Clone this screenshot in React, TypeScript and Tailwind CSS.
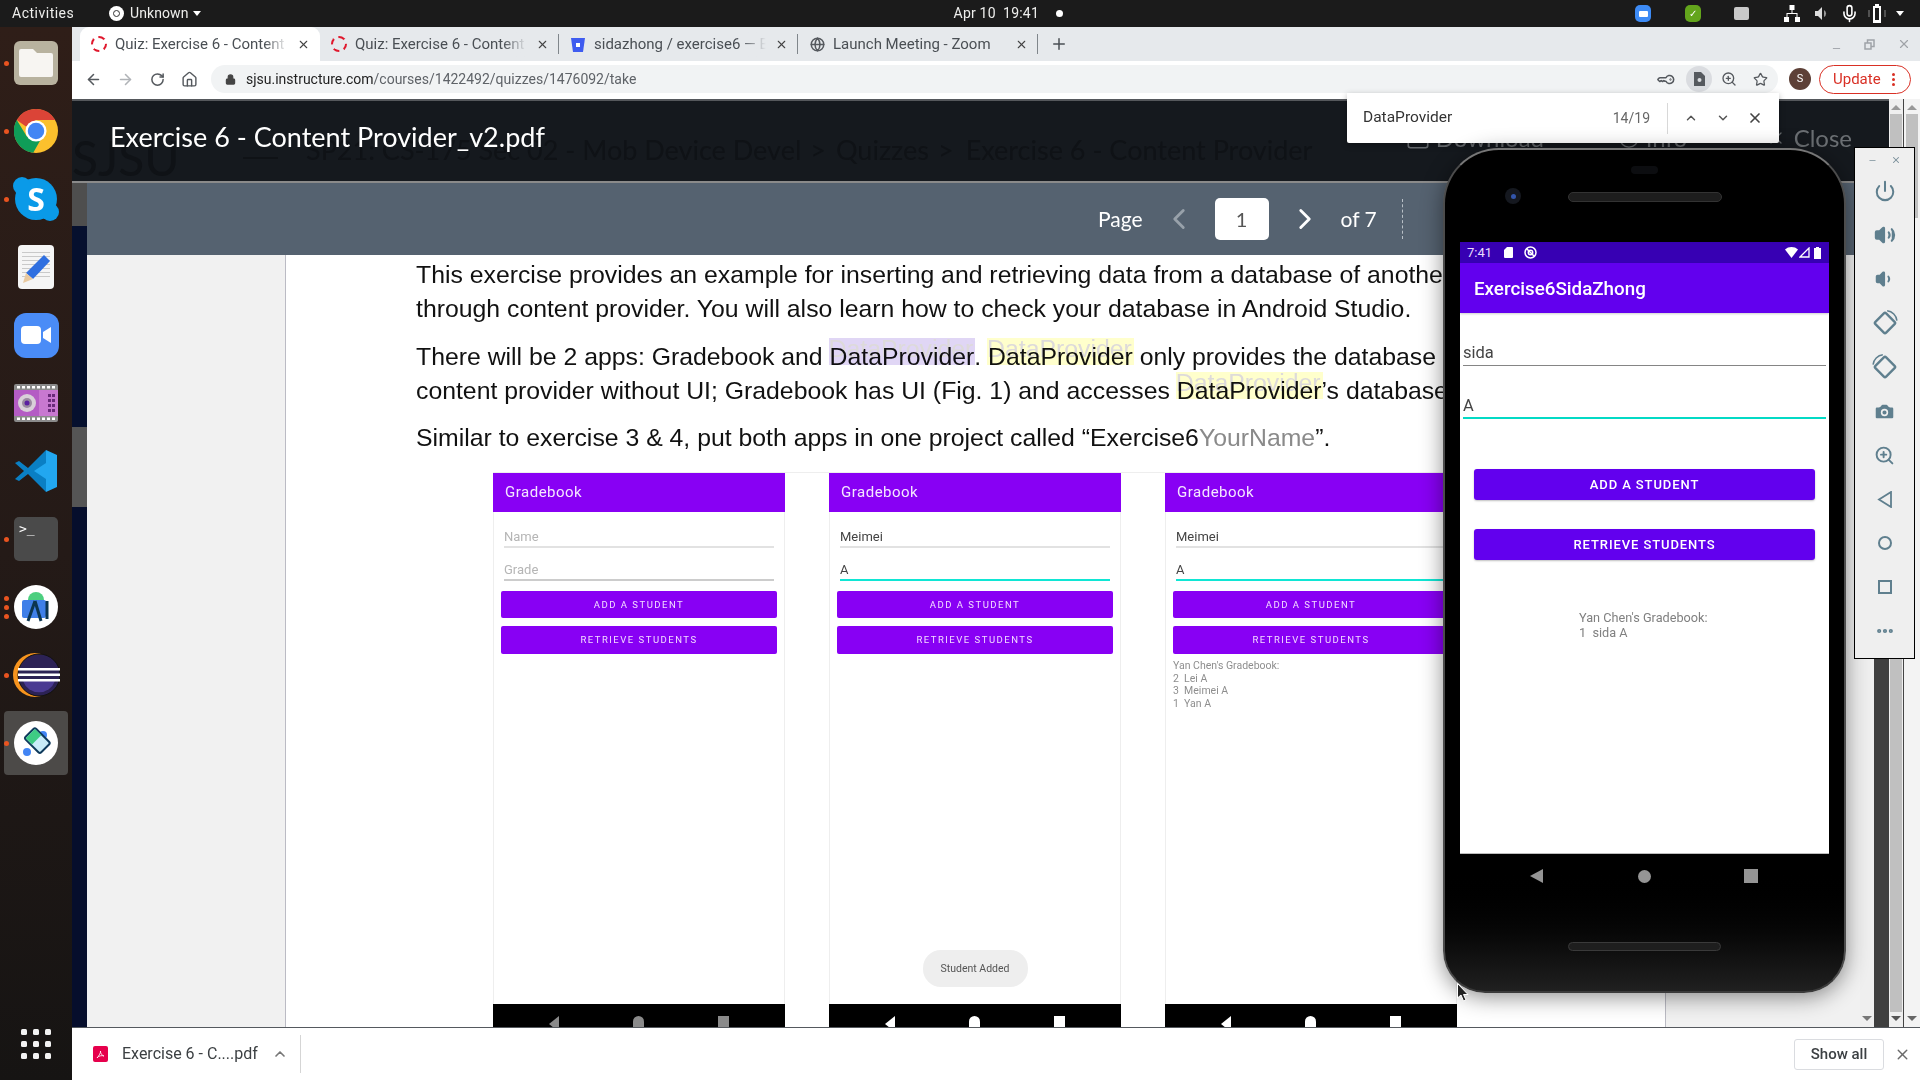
import React from "react";
import { ArrowLeft, ArrowRight, RotateCw, Home, Lock, KeyRound, ZoomIn, Star, X, Plus, ChevronUp, ChevronDown, ChevronLeft, ChevronRight, Power, Volume2, Volume1, Camera, Globe, Minus, Mic, Download, Info, MoreHorizontal } from "lucide-react";

const ub = "font-['Roboto','Noto_Sans',sans-serif]";

function Dot() { return <span className="w-[5px] h-[5px] rounded-full bg-[#e95420]" />; }

function DockSlot({ dots = 0, active = false, children }: { dots?: number; active?: boolean; children: React.ReactNode }) {
  return (
    <div className="relative h-[68px] w-[72px] flex items-center justify-center">
      {active && <div className="absolute left-[4px] top-[2px] w-[64px] h-[64px] rounded-[4px] bg-[#4c4a48]" />}
      {dots > 0 && (
        <div className="absolute left-[4px] top-0 h-full flex flex-col justify-center gap-[4px]">
          {Array.from({ length: dots }).map((_, i) => <Dot key={i} />)}
        </div>
      )}
      <div className="relative w-[46px] h-[46px] flex items-center justify-center">{children}</div>
    </div>
  );
}

function Dock() {
  return (
    <div className="w-[72px] shrink-0 flex flex-col items-center bg-linear-to-b from-[#2f1e18] via-[#241a17] to-[#161413] pt-[2px]">
      <DockSlot dots={1}>
        <div className="w-[44px] h-[44px] rounded-[6px] bg-[#b8b29f] flex items-center justify-center">
          <svg width="34" height="28" viewBox="0 0 34 28"><path fill="#f7f5f2" d="M2 0h12l4 4h14a2 2 0 0 1 2 2v20a2 2 0 0 1-2 2H2a2 2 0 0 1-2-2V2a2 2 0 0 1 2-2z" /></svg>
        </div>
      </DockSlot>
      <DockSlot dots={1}>
        <svg width="44" height="44" viewBox="0 0 48 48">
          <circle cx="24" cy="24" r="24" fill="#fbc02d" />
          <path fill="#0f9d58" d="M3 12 A24 24 0 0 0 21 47.8 L31 30 L14 30Z" />
          <path fill="#db4437" d="M24 0 A24 24 0 0 1 45 12 L24 12 L13 19 L3 12 A24 24 0 0 1 24 0Z" />
          <circle cx="24" cy="24" r="11.5" fill="#fff" />
          <circle cx="24" cy="24" r="9" fill="#4285f4" />
        </svg>
      </DockSlot>
      <DockSlot dots={1}>
        <div className="relative w-[42px] h-[42px] rounded-full bg-[#0a9ae8] flex items-center justify-center">
          <div className="absolute left-[-2px] top-[-1px] w-[18px] h-[18px] rounded-full bg-[#0a9ae8]" />
          <div className="absolute right-[-2px] bottom-[-1px] w-[18px] h-[18px] rounded-full bg-[#0a9ae8]" />
          <span className="relative text-white font-bold text-[32px] leading-none font-['Open_Sans',sans-serif]">S</span>
        </div>
      </DockSlot>
      <DockSlot>
        <div className="relative w-[36px] h-[44px] rounded-[4px] bg-[#f5f5f5] overflow-hidden flex flex-col gap-[3px] pt-[7px] px-[4px]">
          {[0,1,2,3,4,5,6].map(i => <div key={i} className="h-px bg-[#c9c9c9]" />)}
          <svg className="absolute inset-0" width="36" height="44" viewBox="0 0 36 44"><path fill="#2f6fe0" d="M26 10l6 6-17 18-7-6z" /><path fill="#e8c9a0" d="M8 28l7 6-10 4z" /></svg>
        </div>
      </DockSlot>
      <DockSlot>
        <div className="w-[45px] h-[45px] rounded-[12px] bg-[#4a8cf7] flex items-center justify-center">
          <svg width="30" height="18" viewBox="0 0 30 18"><rect width="20" height="18" rx="4" fill="#fff" /><path fill="#fff" d="M22 6l8-5v16l-8-5z" /></svg>
        </div>
      </DockSlot>
      <DockSlot>
        <svg width="44" height="38" viewBox="0 0 44 38">
          <rect width="44" height="38" rx="2" fill="#8a8a8a" />
          <rect y="6" width="44" height="26" fill="#b45cc4" />
          <rect x="25" y="6" width="19" height="26" fill="#c878d0" />
          <circle cx="13" cy="19" r="9" fill="#d8d0d8" /><circle cx="13" cy="19" r="5" fill="#9a8aa0" /><circle cx="13" cy="19" r="2.5" fill="#5a1fa0" />
          {[3,8,13,18,23,28,33,38].map(x => <g key={x}><rect x={x} y="2" width="3" height="2.5" fill="#fff" /><rect x={x} y="33.5" width="3" height="2.5" fill="#fff" /></g>)}
          {[10,15,20,25].map(y => <g key={y}><rect x="34" y={y} width="3" height="3" fill="#6a2a7a" /><rect x="38" y={y} width="3" height="3" fill="#6a2a7a" /></g>)}
        </svg>
      </DockSlot>
      <DockSlot>
        <svg width="44" height="44" viewBox="0 0 44 44">
          <path fill="#0a7fc4" d="M32 1 14 19 5 12l-4 2 9 8-9 8 4 2 9-7 18 18z" />
          <path fill="#22a7f0" d="M32 1l11 5v32l-11 5V14L20 22l12 8z" />
        </svg>
      </DockSlot>
      <DockSlot dots={1}>
        <div className="w-[44px] h-[44px] rounded-[5px] bg-[#4a4a4a] text-white text-[13px] leading-none font-['DejaVu_Sans_Mono',monospace] pl-[5px] pt-[5px]">&gt;_</div>
      </DockSlot>
      <DockSlot dots={3}>
        <div className="relative w-[44px] h-[44px] rounded-full bg-white flex items-center justify-center">
          <svg width="28" height="32" viewBox="0 0 28 32">
            <path fill="#4ccf7f" d="M6 9a8 8 0 0 1 16 0z" />
            <rect x="0" y="9" width="24" height="18" rx="2" fill="#3f7fe8" />
            <path d="M13 10 6 30M13 10l6 20M25 10v18" stroke="#0c3550" strokeWidth="3" fill="none" />
          </svg>
        </div>
      </DockSlot>
      <DockSlot dots={1}>
        <svg width="48" height="44" viewBox="0 0 48 44" className="shrink-0">
          <circle cx="23" cy="22" r="22" fill="#f7941e" />
          <circle cx="27" cy="22" r="21" fill="#2c2255" stroke="#111" strokeWidth="1" />
          <path fill="#4a3a92" d="M11 28h32a17 17 0 0 1-32 0z" />
          <rect x="6" y="15" width="42" height="2.5" fill="#fff" /><rect x="6" y="20.5" width="42" height="2.5" fill="#fff" /><rect x="6" y="26" width="42" height="2.5" fill="#fff" />
        </svg>
      </DockSlot>
      <DockSlot dots={1} active>
        <div className="w-[44px] h-[44px] rounded-full bg-white flex items-center justify-center">
          <svg width="34" height="34" viewBox="0 0 34 34">
            <circle cx="24" cy="9" r="4" fill="#4285f4" /><circle cx="8" cy="26" r="4" fill="#4285f4" />
            <g transform="rotate(45 18 15)"><rect x="7" y="7" width="22" height="15" rx="2" fill="#c9ecf9" stroke="#0f3a5c" strokeWidth="2" /><rect x="8" y="8" width="9" height="13" fill="#3ecb84" /></g>
          </svg>
        </div>
      </DockSlot>
      <div className="flex-1" />
      <div className="grid grid-cols-3 gap-x-[6px] gap-y-[6px] mb-[21px]">
        {Array.from({ length: 9 }).map((_, i) => <div key={i} className="w-[6px] h-[6px] rounded-[1.5px] bg-[#f2f2f2]" />)}
      </div>
    </div>
  );
}

function TopBar() {
  return (
    <div className={`h-[27px] shrink-0 bg-[#1b1b1b] text-[#eeeeec] text-[14px] flex items-center ${ub}`}>
      <span className="ml-[12px] w-[97px] tracking-[0.5px]">Activities</span>
      <span className="w-[15px] h-[15px] rounded-full bg-white mr-[6px] flex items-center justify-center"><span className="w-[7px] h-[7px] rounded-full border border-[#333]" /></span>
      <span className="tracking-[0.1px]">Unknown</span>
      <span className="ml-[4px] w-0 h-0 border-l-[4px] border-r-[4px] border-t-[5px] border-l-transparent border-r-transparent border-t-white" />
      <div className="flex-1 flex items-center justify-center pl-[190px]">
        <span className="ml-[6px] tracking-[0.2px]">Apr 10&nbsp;&nbsp;19:41</span>
        <span className="ml-[17px] w-[7px] h-[7px] rounded-full bg-white" />
      </div>
      <div className="w-[300px] flex items-center relative h-full">
        <div className="absolute left-[15px] top-[5px] w-[16px] h-[17px] rounded-[5px] bg-[#3d8bf5] flex items-center justify-center"><span className="w-[9px] h-[6px] bg-white rounded-[1px]" /></div>
        <div className="absolute left-[65px] top-[5px] w-[16px] h-[17px] rounded-[5px] bg-[#63a51c] flex items-center justify-center text-[10px] text-white leading-none">✓</div>
        <div className="absolute left-[114px] top-[7px] w-[15px] h-[13px] rounded-[2px] bg-[#c9c9c9]" />
        <svg className="absolute left-[164px] top-[5px]" width="16" height="17" viewBox="0 0 16 17" fill="#fff"><rect x="5.5" y="0" width="5" height="5" /><rect x="0" y="12" width="5" height="5" /><rect x="11" y="12" width="5" height="5" /><path d="M7.5 5h1v3h5v4h-1V9H3.500v3h-1V8h5z" /></svg>
        <svg className="absolute left-[195px] top-[7px]" width="14" height="13" viewBox="0 0 14 13" fill="#ddd"><path d="M0 4h3l4-4v13l-4-4H0z" /><path d="M9 3a4 4 0 0 1 0 7z" fill="#999" /></svg>
        <Mic className="absolute left-[220px] top-[4px]" size={19} color="#fff" strokeWidth={2} />
        <svg className="absolute left-[248px] top-[4px]" width="18" height="19" viewBox="0 0 18 19"><path d="M7 0h4v2h2v17H5V2h2z" fill="#fff" /><path d="M7 4h4v12H7z" fill="#1b1b1b" /><path d="M1 6v7M17 6v7" stroke="#888" /></svg>
        <span className="absolute left-[276px] top-[11px] w-0 h-0 border-l-[4px] border-r-[4px] border-t-[5px] border-l-transparent border-r-transparent border-t-white" />
      </div>
    </div>
  );
}

function QuizIcon() {
  return <span className="w-[16px] h-[16px] rounded-full border-[2px] border-dashed border-[#e0182d] shrink-0" />;
}

function Tab({ w, icon, title, active, sep, fade }: { w: number; icon: React.ReactNode; title: string; active?: boolean; sep?: boolean; fade: string }) {
  return (
    <div style={{ width: w }} className={`relative h-[34px] shrink-0 flex items-center pl-[11px] pr-[10px] ${active ? "bg-white rounded-t-[9px]" : ""}`}>
      <span className="w-[16px] flex justify-center shrink-0">{icon}</span>
      <div className="ml-[8px] flex-1 relative overflow-hidden whitespace-nowrap text-[15px] text-[#4a4f54] leading-[34px]">
        <span>{title}</span>
        <div className={`absolute right-0 top-0 h-full w-[24px] bg-linear-to-r from-transparent ${fade}`} />
      </div>
      <X size={13} strokeWidth={2} color="#444" className="ml-[9px] shrink-0" />
      {sep && <span className="absolute right-0 top-[7px] h-[20px] w-px bg-[#80868b]" />}
    </div>
  );
}

function TabStrip() {
  return (
    <div className={`h-[34px] shrink-0 bg-[#e6e9ec] flex items-center pl-[8px] ${ub}`}>
      <Tab w={240} active icon={<QuizIcon />} title="Quiz: Exercise 6 - Content" fade="to-white" />
      <Tab w={239} sep icon={<QuizIcon />} title="Quiz: Exercise 6 - Content" fade="to-[#e6e9ec]" />
      <Tab w={239} sep fade="to-[#e6e9ec]" title="sidazhong / exercise6 — B" icon={
        <svg width="14" height="15" viewBox="0 0 14 15"><path fill="#3f5cf0" d="M0 1h14l-2 14H2z" /><rect x="5" y="6" width="4" height="4" fill="#fff" /></svg>} />
      <Tab w={240} sep fade="to-transparent" title="Launch Meeting - Zoom" icon={<Globe size={15} color="#55595e" strokeWidth={2.4} />} />
      <Plus size={18} color="#4a4f54" strokeWidth={2} className="ml-[12px]" />
      <div className="flex-1" />
      <div className="flex items-center gap-[22px] pr-[9px] text-[#9fa3a8]">
        <Minus size={11} strokeWidth={2} className="translate-y-[4px]" />
        <svg width="11" height="11" viewBox="0 0 11 11" fill="none" stroke="currentColor" strokeWidth="1.5"><rect x="3.500" y="1" width="6.500" height="6.500" /><rect x="1" y="4" width="6" height="6" fill="#e6e9ec" /></svg>
        <X size={14} strokeWidth={2} />
      </div>
    </div>
  );
}

function Toolbar() {
  return (
    <div className={`h-[38px] shrink-0 bg-white flex items-center pl-[13px] pr-[9px] pb-[2px] ${ub}`}>
      <ArrowLeft size={17} color="#55595e" strokeWidth={2.2} />
      <ArrowRight size={17} color="#b0b3b7" strokeWidth={2.2} className="ml-[15px]" />
      <RotateCw size={15} color="#55595e" strokeWidth={2.4} className="ml-[16px]" />
      <Home size={17} color="#55595e" strokeWidth={2} className="ml-[16px]" />
      <div className="ml-[13px] h-[28px] w-[1567px] rounded-full bg-[#f1f3f4] flex items-center pl-[14px] pr-[10px]">
        <Lock size={11} color="#444" fill="#444" strokeWidth={2.5} />
        <span className="ml-[10px] text-[14px] text-[#222]">sjsu.instructure.com<span className="text-[#5f6368]">/courses/1422492/quizzes/1476092/take</span></span>
        <div className="flex-1" />
        <KeyRound size={15} color="#55595e" strokeWidth={2.5} className="rotate-45 -translate-x-[2px]" />
        <div className="ml-[10px] w-[26px] h-[26px] rounded-full bg-[#dadce0] flex items-center justify-center">
          <svg width="11" height="14" viewBox="0 0 11 14"><path fill="#55595e" d="M0 0h7l4 4v10H0z" /><circle cx="5.500" cy="8" r="2" fill="#dadce0" /></svg>
        </div>
        <ZoomIn size={16} color="#55595e" strokeWidth={2} className="ml-[9px]" />
        <Star size={15} color="#55595e" strokeWidth={2} className="ml-[16px]" />
      </div>
      <div className="ml-[11px] w-[22px] h-[22px] rounded-full bg-[#5d4037] text-white text-[11px] flex items-center justify-center">S</div>
      <div className="ml-[8px] w-[92px] h-[29px] rounded-full border border-[#d93025] flex items-center pl-[13px] text-[15px] text-[#d93025]">
        Update
        <span className="ml-[11px] flex flex-col gap-[2px]">
          <span className="w-[3px] h-[3px] rounded-full bg-[#d93025]" /><span className="w-[3px] h-[3px] rounded-full bg-[#d93025]" /><span className="w-[3px] h-[3px] rounded-full bg-[#d93025]" />
        </span>
      </div>
    </div>
  );
}

function ViewerHeader() {
  return (
    <div className="relative h-[84px] shrink-0 bg-[#15191e] border-t-2 border-t-[#55585c] border-b-2 border-b-[#8a8a8a] overflow-hidden font-['Lato',sans-serif]">
      <div className="absolute left-0 top-[27px] flex items-center text-[27px] text-[#0f1216] whitespace-nowrap leading-[44px]">
        <span className="text-[48px] w-[171px] translate-y-[8px] leading-[44px]">SJSU</span>
        <span className="w-[35px] h-[2px] bg-[#0f1216] mr-[28px] translate-y-[8px]" />
        <span>SP21: CS-175 Sec 02 - Mob Device Devel</span>
        <span className="ml-[9px]">&gt;</span>
        <span className="ml-[10px]">Quizzes</span>
        <span className="ml-[9px]">&gt;</span>
        <span className="ml-[12px]">Exercise 6 - Content Provider</span>
      </div>
      <div className="relative h-full flex items-center pl-[38px] pb-[7px]">
        <span className="text-white text-[27px]">Exercise 6 - Content Provider_v2.pdf</span>
        <div className="flex-1" />
        <div className="flex items-center text-[#6b6f73] text-[24px] pr-[37px]">
          <Download size={26} strokeWidth={1.500} />
          <span className="ml-[5px] w-[182px]">Download</span>
          <Info size={22} strokeWidth={1.500} />
          <span className="ml-[6px] w-[120px]">Info</span>
          <X size={20} strokeWidth={1.500} />
          <span className="ml-[8px]">Close</span>
        </div>
      </div>
    </div>
  );
}

function Hl({ c }: { c: string }) {
  return (
    <span className="relative inline-block">
      <span className={`absolute left-[-1px] right-[-1px] top-[-2px] h-[27px] text-[#dddada] mix-blend-multiply ${c} leading-[22px]`}>DataProvider</span>
      DataProvider
    </span>
  );
}

function PhoneCard({ name, grade, first, toast, list, tone }: { name: string; grade: string; first?: boolean; toast?: boolean; list?: boolean; tone: string }) {
  const navC = tone === "g" ? "bg-[#8a8a8a]" : "bg-white";
  return (
    <div className="relative w-[292px] h-[554px] shrink-0 border-x border-[#eeeeee] flex flex-col font-['Roboto',sans-serif] bg-white">
      <div className="h-[39px] shrink-0 -mx-px bg-[#8800f4] text-[#f4e6ff] text-[15px] tracking-[0.5px] leading-[38px] pl-[12px]">Gradebook</div>
      <div className="mx-[10px] mt-[14px] h-[22px] border-b-2 border-[#e2e2e2] text-[13px] leading-[20px] pt-[1px]">
        <span className={first ? "text-[#b5b5b5]" : "text-[#444]"}>{name}</span>
      </div>
      <div className={`mx-[10px] mt-[11px] h-[22px] border-b-2 text-[13px] leading-[20px] pt-[1px] ${first ? "border-[#cccccc]" : "border-[#10e6d4]"}`}>
        <span className={first ? "text-[#b5b5b5]" : "text-[#444]"}>{grade}</span>
      </div>
      <div className="mx-[7px] mt-[10px] h-[27px] rounded-[2px] bg-[#8800f4] flex items-center justify-center text-[#f3dcff] text-[9.500px] tracking-[1.5px]">ADD A STUDENT</div>
      <div className="mx-[7px] mt-[8px] h-[28px] rounded-[2px] bg-[#8800f4] flex items-center justify-center text-[#f3dcff] text-[9.500px] tracking-[1.5px]">RETRIEVE STUDENTS</div>
      {list && (
        <div className="ml-[7px] mt-[6px] text-[10.500px] leading-[12.500px] text-[#8e8e8e] whitespace-pre">
          <div>Yan Chen's Gradebook:</div><div>2  Lei A</div><div>3  Meimei A</div><div>1  Yan A</div>
        </div>
      )}
      <div className="flex-1" />
      {toast && <div className="self-center mb-[17px] w-[105px] h-[37px] rounded-[18px] bg-[#eeeeee] text-[#555] text-[10.500px] flex items-center justify-center">Student Added</div>}
      <div className="h-[23px] shrink-0 -mx-px bg-black overflow-hidden flex items-start justify-between px-[56px] pt-[12px]">
        <span className={`w-0 h-0 border-y-[8px] border-y-transparent border-r-[10px] ${tone === "g" ? "border-r-[#8a8a8a]" : "border-r-white"}`} />
        <span className={`w-[11px] h-[16px] rounded-full ${navC}`} />
        <span className={`w-[11px] h-[16px] ${navC}`} />
      </div>
    </div>
  );
}

function PdfPage() {
  return (
    <div className="w-[1379px] shrink-0 bg-white overflow-hidden font-['Liberation_Sans',Arial,sans-serif] text-[#111] text-[24.800px] leading-[34px] whitespace-nowrap pt-[3px]">
      <div className="pl-[130px]">
        <p>This exercise provides an example for inserting and retrieving data from a database of another app</p>
        <p>through content provider. You will also learn how to check your database in Android Studio.</p>
        <p className="mt-[14px]">There will be 2 apps: Gradebook and <Hl c="bg-[#e0d6f5]" />. <Hl c="bg-[#ffffcc]" /> only provides the database and</p>
        <p>content provider without UI; Gradebook has UI (Fig. 1) and accesses <Hl c="bg-[#ffffcc]" />’s database</p>
        <p className="mt-[13px]">Similar to exercise 3 &amp; 4, put both apps in one project called “Exercise6<span className="text-[#8a8a8a]">YourName</span>”.</p>
      </div>
      <div className="mt-[17px] ml-[207px] flex gap-[44px] whitespace-normal border-t border-[#eeeeee] blur-[0.35px]">
        <PhoneCard first name="Name" grade="Grade" tone="g" />
        <PhoneCard name="Meimei" grade="A" toast tone="w" />
        <PhoneCard name="Meimei" grade="A" list tone="w" />
      </div>
    </div>
  );
}

function ScrollArrow({ up, c = "#777" }: { up?: boolean; c?: string }) {
  return <span className={`w-0 h-0 border-x-[5px] border-x-transparent ${up ? "border-b-[5px]" : "border-t-[5px]"}`} style={up ? { borderBottomColor: c } : { borderTopColor: c }} />;
}

function Strip() {
  return (
    <div className="w-[15px] shrink-0 flex flex-col">
      <div className="h-[43px] bg-[#4e4e4e]" />
      <div className="h-[201px] bg-[#06102e]" />
      <div className="h-[80px] bg-[#555555]" />
      <div className="flex-1 bg-[#060e2c]" />
    </div>
  );
}

function Viewer() {
  return (
    <div className="flex-1 min-h-0 flex">
      <div className="w-[1817px] shrink-0 flex flex-col bg-[#3f3f3f]">
        <ViewerHeader />
        <div className="flex-1 min-h-0 flex relative">
          <Strip />
          <div className="flex-1 min-w-0 flex flex-col">
            <div className="h-[72px] shrink-0 bg-[#556270] flex items-center text-white text-[21px] font-['Lato',sans-serif] pl-[1011px] pb-px">
              <span>Page</span>
              <ChevronLeft size={34} strokeWidth={2} color="#98a1aa" className="ml-[19px]" />
              <div className="ml-[19px] w-[54px] h-[42px] mt-px rounded-[5px] bg-white text-[#555] text-[20px] flex items-center justify-center">1</div>
              <ChevronRight size={34} strokeWidth={2} color="#fff" className="ml-[19px]" />
              <span className="ml-[19px]">of 7</span>
              <span className="ml-[25px] h-[40px] border-l border-dashed border-[#b9c0c7]" />
            </div>
            <div className="flex-1 min-h-0 flex">
              <div className="w-[199px] shrink-0 bg-[#f1f1f1] border-r border-[#bbbbc4]" />
              <PdfPage />
              <div className="flex-1 bg-[#f1f1f1] border-l border-[#bbbbc4] flex justify-end">
                <div className="w-[14px] bg-[#efefef] flex flex-col items-center justify-end pb-[6px]"><ScrollArrow /></div>
              </div>
            </div>
          </div>
          <div className="w-[15px] shrink-0 bg-[#3f3f3f]" />
        </div>
      </div>
      <div className="w-[15px] shrink-0 bg-[#efefef] flex flex-col items-center py-[6px] border-r border-[#444]">
        <ScrollArrow up c="#999" />
        <div className="w-[12px] flex-1 my-[4px] bg-[#c0c0c0]" />
        <ScrollArrow c="#555" />
      </div>
      <div className="flex-1 bg-[#f3f3f3] flex flex-col items-center py-[6px]">
        <ScrollArrow up c="#999" />
        <div className="w-[12px] h-[104px] mt-[4px] bg-[#c0c0c0]" />
        <div className="flex-1" />
        <ScrollArrow c="#666" />
      </div>
    </div>
  );
}

function DownloadBar() {
  return (
    <div className={`h-[53px] shrink-0 bg-white border-t border-[#55595e] flex items-center ${ub}`}>
      <div className="ml-[21px] w-[15px] h-[16px] rounded-[2px] bg-[#e6004c] flex items-center justify-center">
        <svg width="9" height="9" viewBox="0 0 9 9" fill="none" stroke="#fff" strokeWidth="0.8"><path d="M1 8C3 6 5 2 4.500 1 4 2 6 6 8 6 6 5 2 6 1 8z" /></svg>
      </div>
      <span className="ml-[14px] text-[16px] text-[#3c4043] w-[150px] whitespace-nowrap">Exercise 6 - C....pdf</span>
      <ChevronUp size={16} strokeWidth={2.500} color="#777" />
      <span className="ml-[12px] h-[38px] w-px bg-[#d5d5d5]" />
      <div className="flex-1" />
      <div className="w-[90px] h-[31px] rounded-[3px] border border-[#dadce0] text-[15px] font-medium text-[#3c4043] flex items-center justify-center">Show all</div>
      <X size={17} strokeWidth={2} color="#6a6a6a" className="ml-[10px] mr-[9px]" />
    </div>
  );
}

function FindBar() {
  return (
    <div className={`absolute left-[1347px] top-[93px] w-[432px] h-[50px] bg-white rounded-b-[2px] shadow-[0_2px_6px_rgba(0,0,0,0.3)] flex items-center pl-[16px] pr-[16px] text-[14px] ${ub}`}>
      <span className="text-[#333] text-[15.500px]">DataProvider</span>
      <div className="flex-1" />
      <span className="text-[#666]">14/19</span>
      <span className="ml-[17px] h-[31px] w-px bg-[#d8d8d8]" />
      <ChevronUp size={14} strokeWidth={2.500} color="#555" className="ml-[16px]" />
      <ChevronDown size={14} strokeWidth={2.500} color="#555" className="ml-[18px]" />
      <X size={16} strokeWidth={2.500} color="#444" className="ml-[17px]" />
    </div>
  );
}

function Phone() {
  return (
    <div className="absolute left-[1443px] top-[148px] w-[403px] h-[845px] rounded-t-[56px] rounded-b-[42px] bg-linear-to-b from-black via-black via-85% to-[#202020] border-[2px] border-[#4c4c4c] border-t-[#777777] border-b-[#3a3a3a] shadow-[0_4px_22px_rgba(0,0,0,0.45)] flex flex-col items-center">
      <div className="relative w-full h-[92px] shrink-0 flex flex-col items-center">
        <div className="mt-[16px] w-[27px] h-[8px] rounded-full bg-[#0c0d10]" />
        <div className="mt-[18px] w-[154px] h-[10px] rounded-full bg-[#1d1d1d] border border-[#333]" />
        <div className="absolute left-[60px] top-[38px] w-[16px] h-[16px] rounded-full bg-[#15181f] flex items-center justify-center"><span className="w-[5px] h-[5px] rounded-full bg-[#3355aa]" /></div>
      </div>
      <div className="w-[369px] h-[612px] shrink-0 bg-white flex flex-col font-['Roboto',sans-serif] border-b border-[#bdbdbd]">
        <div className="h-[21px] shrink-0 bg-[#3700b3] flex items-center px-[7px] text-[#e8ddff] text-[13px]">
          <span>7:41</span>
          <svg className="ml-[12px]" width="9" height="11" viewBox="0 0 9 11" fill="#fff"><path d="M3 0h5a1 1 0 0 1 1 1v9a1 1 0 0 1-1 1H1a1 1 0 0 1-1-1V3z" /></svg>
          <svg className="ml-[11px]" width="13" height="13" viewBox="0 0 13 13" fill="none" stroke="#fff" strokeWidth="1.500"><circle cx="6.500" cy="6.500" r="5.500" /><circle cx="6.500" cy="6.500" r="2.200" /><path d="M3 3l7 7" /></svg>
          <div className="flex-1" />
          <svg width="13" height="11" viewBox="0 0 13 11" fill="#fff"><path d="M0 2.500C3.500-.8 9.500-.8 13 2.500L6.500 11z" /></svg>
          <svg className="ml-[1px]" width="11" height="11" viewBox="0 0 11 11" fill="none" stroke="#fff" strokeWidth="1.300"><path d="M10 1v9H1z" /></svg>
          <svg className="ml-[4px] mr-[1px]" width="7" height="12" viewBox="0 0 7 12" fill="#fff"><path d="M2 0h3v1h2v11H0V1h2z" /></svg>
        </div>
        <div className="h-[50px] shrink-0 bg-[#6200ee] flex items-center pl-[14px] pt-[2px] text-white text-[18.800px] font-medium shadow-[0_1px_2px_rgba(0,0,0,0.2)]">Exercise6SidaZhong</div>
        <div className="mx-[3px] mt-[28px] h-[25px] border-b border-[#858585] text-[16.500px] text-[#444] leading-[24px]">sida</div>
        <div className="mx-[3px] mt-[27px] h-[26px] border-b-2 border-[#03dac5] text-[16.500px] text-[#444] leading-[25px]">A</div>
        <div className="mx-[14px] mt-[50px] h-[31px] rounded-[3px] bg-[#6200ee] text-white text-[13px] font-medium tracking-[0.9px] flex items-center justify-center pt-px shadow-[0_1px_2px_rgba(0,0,0,0.25)]">ADD A STUDENT</div>
        <div className="mx-[14px] mt-[29px] h-[31px] rounded-[3px] bg-[#6200ee] text-white text-[13px] font-medium tracking-[0.9px] flex items-center justify-center pt-px shadow-[0_1px_2px_rgba(0,0,0,0.25)]">RETRIEVE STUDENTS</div>
        <div className="ml-[119px] mt-[50px] text-[12.700px] leading-[15px] text-[#808080] whitespace-pre">
          <div>Yan Chen's Gradebook:</div>
          <div>1  sida A</div>
        </div>
      </div>
      <div className="w-[369px] h-[44px] shrink-0 flex items-center justify-between pl-[70px] pr-[71px]">
        <span className="w-0 h-0 border-y-[7px] border-y-transparent border-r-[13px] border-r-[#959595]" />
        <span className="w-[13px] h-[13px] rounded-full bg-[#959595] ml-[1px]" />
        <span className="w-[14px] h-[14px] bg-[#959595]" />
      </div>
      <div className="mt-[44px] w-[153px] h-[9px] rounded-full bg-[#1e1e1e] border border-[#3a3a3a]" />
    </div>
  );
}

function EmuPanel() {
  const c = "#5f7f8e";
  return (
    <div className="absolute left-[1854px] top-[147px] w-[61px] h-[512px] bg-[#efefef] border border-black flex flex-col items-center pt-[5px]">
      <div className="w-full flex items-center justify-center gap-[14px] h-[14px] text-[#7a8f9a]">
        <Minus size={9} strokeWidth={2} /><X size={10} strokeWidth={2.500} />
      </div>
      <div className="mt-[2px] flex flex-col items-center">
        {[
          <Power size={22} color={c} strokeWidth={2.200} />,
          <Volume2 size={22} color={c} fill={c} strokeWidth={2.200} />,
          <Volume1 size={20} color={c} fill={c} strokeWidth={2.200} />,
          <svg width="26" height="26" viewBox="0 0 24 24" fill="none" stroke={c} strokeWidth="2.200"><rect x="5" y="5" width="14" height="14" rx="1.500" transform="rotate(45 12 12)" /><path d="M14 .8a10 10 0 0 1 9 9" strokeWidth="1.400" /></svg>,
          <svg width="26" height="26" viewBox="0 0 24 24" fill="none" stroke={c} strokeWidth="2.200"><rect x="5" y="5" width="14" height="14" rx="1.500" transform="rotate(45 12 12)" /><path d="M10 .8a10 10 0 0 0-9 9" strokeWidth="1.400" /></svg>,
          <Camera size={23} color="#efefef" fill={c} strokeWidth={1.700} />,
          <ZoomIn size={21} color={c} strokeWidth={2.200} />,
          <svg width="16" height="17" viewBox="0 0 16 17" fill="none" stroke={c} strokeWidth="1.800"><path d="M14 1v15L2 8.500z" /></svg>,
          <span className="w-[14px] h-[14px] rounded-full border-2 border-[#5f7f8e]" />,
          <span className="w-[14px] h-[14px] border-2 border-[#5f7f8e]" />,
          <MoreHorizontal size={20} color={c} strokeWidth={3} />,
        ].map((ic, i) => (
          <div key={i} className="h-[44px] w-[44px] flex items-center justify-center">{ic}</div>
        ))}
      </div>
    </div>
  );
}

function Cursor() {
  return (
    <svg className="absolute left-[1457px] top-[983px]" width="12" height="19" viewBox="0 0 12 19">
      <path d="M0.500 0.500V15l3.500-3 2.500 6 2.500-1-2.500-5.500H11z" fill="#222" stroke="#fff" strokeWidth="1" />
    </svg>
  );
}

export default function App() {
  return (
    <div className="relative w-[1920px] h-[1080px] overflow-hidden flex flex-col bg-black">
      <TopBar />
      <div className="flex-1 min-h-0 flex">
        <Dock />
        <div className="flex-1 min-w-0 flex flex-col">
          <TabStrip />
          <Toolbar />
          <Viewer />
          <DownloadBar />
        </div>
      </div>
      <FindBar />
      <Phone />
      <EmuPanel />
      <Cursor />
    </div>
  );
}
